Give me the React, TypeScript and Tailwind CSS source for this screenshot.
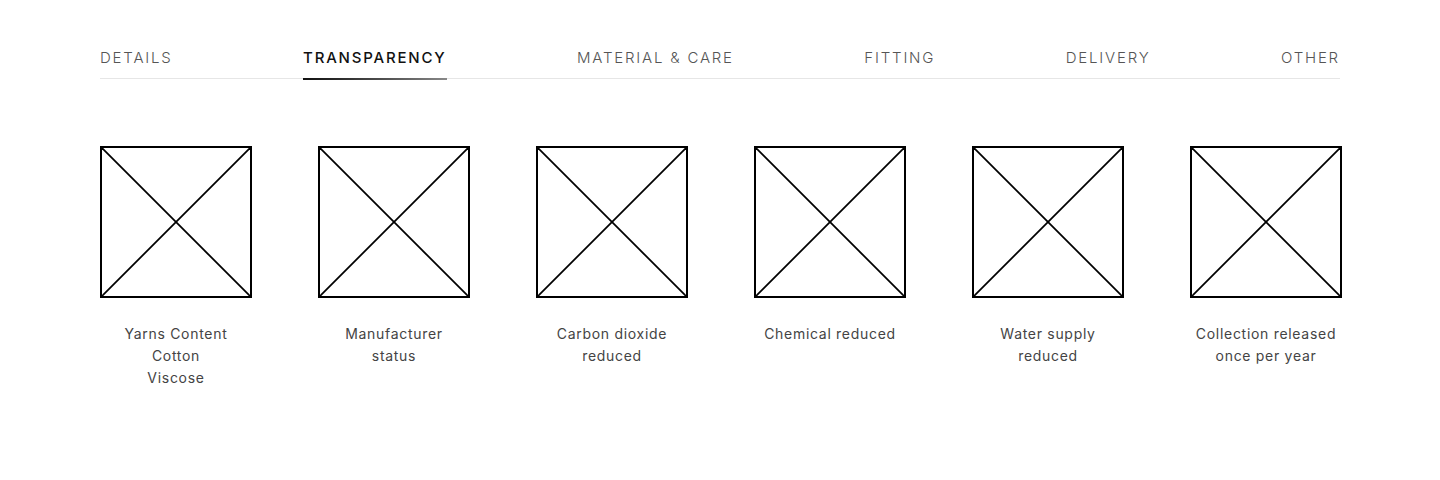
const tabs = ["Details", "Transparency", "Material & Care", "Fitting", "Delivery", "Other"];

const items = [
  ["Yarns Content", "Cotton", "Viscose"],
  ["Manufacturer", "status"],
  ["Carbon dioxide", "reduced"],
  ["Chemical reduced"],
  ["Water supply", "reduced"],
  ["Collection released", "once per year"],
];

function Placeholder() {
  return (
    <div className="relative w-[152px] h-[152px] border-2 border-black">
      <svg className="absolute inset-0 w-full h-full" viewBox="0 0 148 148" preserveAspectRatio="none">
        <line x1="0" y1="0" x2="148" y2="148" stroke="#000" strokeWidth="1.8" />
        <line x1="148" y1="0" x2="0" y2="148" stroke="#000" strokeWidth="1.8" />
      </svg>
    </div>
  );
}

export default function App() {
  return (
    <div className="w-full h-[480px] bg-white px-[100px] pt-[45px]" style={{ fontFamily: "Inter, 'Noto Sans', sans-serif" }}>
      {/* Tabs */}
      <div className="flex justify-between border-b border-[#e6e6e6]">
        {tabs.map((t, i) => (
          <div key={t} className="relative pb-[8px]">
            <span
              className={
                "uppercase text-[15px] tracking-[0.12em] " +
                (i === 1 ? "text-[#111] font-medium" : "text-[#555] font-light")
              }
            >
              {t}
            </span>
            {i === 1 && (
              <div className="absolute left-0 right-0 bottom-[-2px] h-[2px] bg-gradient-to-r from-[#111] to-[#888]" />
            )}
          </div>
        ))}
      </div>

      {/* Items */}
      <div className="flex justify-between mt-[67px] w-[1242px]">
        {items.map((lines, i) => (
          <div key={i} className="flex flex-col items-center w-[152px]">
            <Placeholder />
            <div className="mt-[25px] text-center text-[14px] leading-[22px] tracking-[0.05em] text-[#444] whitespace-nowrap">
              {lines.map((l) => (
                <div key={l}>{l}</div>
              ))}
            </div>
          </div>
        ))}
      </div>
    </div>
  );
}
